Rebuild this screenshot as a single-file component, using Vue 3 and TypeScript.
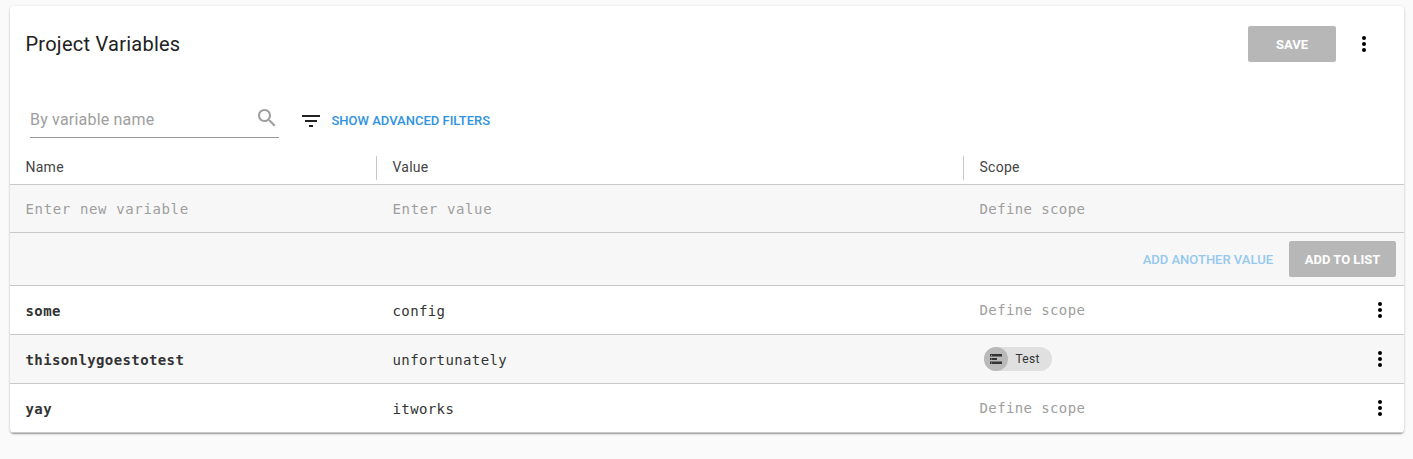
<script setup lang="ts">
interface Variable {
  name: string
  value: string
  scope: string | null
}

const variables: Variable[] = [
  { name: 'some', value: 'config', scope: null },
  { name: 'thisonlygoestotest', value: 'unfortunately', scope: 'Test' },
  { name: 'yay', value: 'itworks', scope: null },
]
</script>

<template>
  <div class="page">
    <main class="card">
      <header class="top">
        <h1 class="title">Project Variables</h1>
        <button class="btn save">SAVE</button>
        <svg class="dots" viewBox="0 0 24 24"><circle cx="12" cy="6" r="2" /><circle cx="12" cy="12" r="2" /><circle cx="12" cy="18" r="2" /></svg>
      </header>

      <section class="filters">
        <div class="search">
          <span class="hint">By variable name</span>
          <svg class="lens" viewBox="0 0 24 24"><path d="M15.5 14h-.79l-.28-.27C15.41 12.59 16 11.11 16 9.5 16 5.91 13.09 3 9.5 3S3 5.91 3 9.5 5.91 16 9.5 16c1.61 0 3.09-.59 4.23-1.57l.27.28v.79l5 4.99L20.49 19l-4.99-5zm-6 0C7.01 14 5 11.99 5 9.5S7.01 5 9.5 5 14 7.01 14 9.5 11.99 14 9.5 14z" /></svg>
        </div>
        <svg class="funnel" viewBox="0 0 24 24"><path d="M10 18h4v-2h-4v2zM3 6v2h18V6H3zm3 7h12v-2H6v2z" /></svg>
        <a class="link">SHOW ADVANCED FILTERS</a>
      </section>

      <div class="row head">
        <div class="cell">Name</div>
        <div class="cell divided">Value</div>
        <div class="cell divided">Scope</div>
      </div>

      <div class="row entry shade">
        <div class="cell wide">Enter new variable</div>
        <div class="cell wide">Enter value</div>
        <div class="cell">Define scope</div>
      </div>

      <div class="row actions shade">
        <a class="link faded">ADD ANOTHER VALUE</a>
        <button class="btn add">ADD TO LIST</button>
      </div>

      <div v-for="(v, i) in variables" :key="v.name" class="row item" :class="{ shade: i % 2 === 1 }">
        <div class="cell name">{{ v.name }}</div>
        <div class="cell value">{{ v.value }}</div>
        <div class="cell scope">
          <span v-if="v.scope" class="chip">
            <span class="disc">
              <svg viewBox="0 0 12 10"><path d="M0 0h12v2.5H0zM0 4h7v2H0zM0 7.5h12V10H0z" /><path class="led" d="M1 1h1v1H1zM1 4.5h1v1H1zM1 8.5h1v1H1z" /></svg>
            </span>
            <span>{{ v.scope }}</span>
          </span>
          <template v-else>Define scope</template>
        </div>
        <svg class="dots" viewBox="0 0 24 24"><circle cx="12" cy="6" r="2" /><circle cx="12" cy="12" r="2" /><circle cx="12" cy="18" r="2" /></svg>
      </div>
    </main>
  </div>
</template>

<style>
html,
body {
  background: #fafafa;
}
</style>

<style scoped>
.page {
  box-sizing: border-box;
  min-height: 459px;
  padding: 6px 0 0 10px;
  background: #fafafa;
}

.card {
  box-sizing: border-box;
  width: 1394px;
  height: 426px;
  background: #fff;
  border-radius: 4px;
  overflow: hidden;
  font-family: Roboto, sans-serif;
  box-shadow: 0 1px 3px rgba(0, 0, 0, 0.2), 0 1px 1px rgba(0, 0, 0, 0.14), 0 2px 1px -1px rgba(0, 0, 0, 0.12);
}

.top {
  box-sizing: border-box;
  display: flex;
  align-items: center;
  height: 76px;
  padding: 0 28px 0 15.5px;
}

.title {
  flex: 1;
  margin: 0;
  font-size: 20px;
  font-weight: 400;
  line-height: 24px;
  letter-spacing: 0.25px;
  color: #212121;
}

.btn {
  box-sizing: border-box;
  height: 36px;
  padding: 1px 0 0;
  border: 0;
  border-radius: 2px;
  background: #b7b7b7;
  color: #fff;
  font-family: inherit;
  font-size: 13px;
  font-weight: 700;
  line-height: 36px;
}

.save {
  width: 88px;
  margin-right: 16px;
}

.add {
  width: 107px;
}

.dots {
  width: 24px;
  height: 24px;
  fill: #000;
}

.filters {
  display: flex;
  align-items: center;
  height: 50px;
  margin-top: 10px;
  padding-left: 20px;
}

.search {
  box-sizing: border-box;
  display: flex;
  align-items: center;
  justify-content: space-between;
  width: 249px;
  height: 38px;
  margin-top: 3px;
  border-bottom: 1px solid #999;
}

.hint {
  margin-top: 2px;
  font-size: 16px;
  letter-spacing: 0.2px;
  color: #9e9e9e;
}

.lens {
  width: 24px;
  height: 24px;
  margin-top: -1px;
  fill: #9e9e9e;
}

.funnel {
  width: 24px;
  height: 24px;
  margin: 8px 8.5px 0 20px;
  fill: #212121;
}

.link {
  margin-top: 7px;
  font-size: 13px;
  font-weight: 500;
  color: #2f93e0;
}

.row {
  box-sizing: border-box;
  display: grid;
  grid-template-columns: 366px 587px 1fr 48px;
  align-items: center;
  border-bottom: 1px solid #c8c8c8;
}

.shade {
  background: #f7f7f7;
}

.cell {
  padding-left: 15.5px;
}

.head {
  height: 43px;
  padding-top: 9px;
  font-size: 14px;
  letter-spacing: 0.25px;
  color: #444;
}

.head .cell {
  height: 24px;
  line-height: 22px;
}

.divided {
  border-left: 1px solid #c8c8c8;
}

.entry,
.item {
  font-family: "DejaVu Sans Mono", monospace;
  font-size: 14px;
  letter-spacing: 0.39px;
}

.entry {
  height: 48px;
  color: #9e9e9e;
}

.entry .wide {
  letter-spacing: 0.64px;
}

.entry .cell + .cell,
.item .cell + .cell {
  padding-left: 16.5px;
}

.actions {
  display: flex;
  justify-content: flex-end;
  height: 53px;
  padding-right: 8px;
}

.faded {
  margin: 0 16px 0 0;
  color: #95c8ef;
}

.item {
  height: 49px;
  color: #333;
}

.item:last-child {
  height: 49px;
}

.name {
  font-weight: 700;
}

.name,
.value {
  padding-top: 2px;
}

.scope {
  color: #9e9e9e;
}

.item .dots {
  margin-left: 12px;
}

.card {
  height: 427px;
}

.chip {
  display: flex;
  align-items: center;
  width: 68px;
  height: 24px;
  margin-left: 4px;
  border-radius: 12px;
  background: #e0e0e0;
  font-family: Roboto, sans-serif;
  font-size: 12px;
  letter-spacing: 0.25px;
  color: #333;
}

.disc {
  display: flex;
  align-items: center;
  justify-content: center;
  width: 24px;
  height: 24px;
  margin-right: 8px;
  border-radius: 50%;
  background: #b9b9b9;
}

.disc svg {
  width: 12px;
  height: 10px;
  fill: #333;
}

.disc .led {
  fill: #999;
}
</style>
